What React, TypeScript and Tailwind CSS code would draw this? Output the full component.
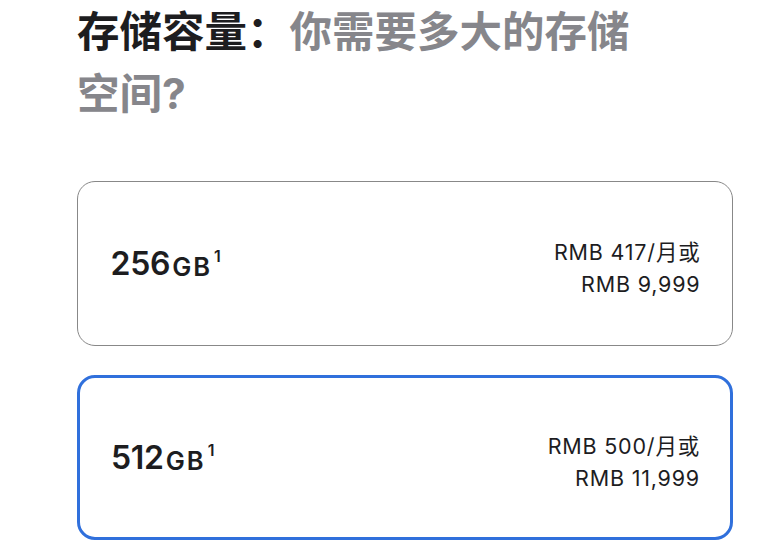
import React from "react";

const font = { fontFamily: 'Inter, "Noto Sans CJK SC", sans-serif' };

function Card({
  size,
  monthly,
  total,
  selected,
}: {
  size: string;
  monthly: string;
  total: string;
  selected?: boolean;
}) {
  return (
    <div
      className={
        selected
          ? "flex h-[165px] w-[656px] items-center justify-between rounded-[18px] border-[3px] border-[#3070dc] bg-white pl-[31px] pr-[30px]"
          : "flex h-[165px] w-[656px] items-center justify-between rounded-[18px] border-[1.5px] border-[#888888] bg-white pl-[32.5px] pr-[31.5px]"
      }
    >
      <div className="flex items-start text-[#1d1d1f]">
        <span className="text-[32px] font-semibold leading-[36px] tracking-[-0.3px]">{size}</span>
        <span className="ml-[2px] mt-[7px] text-[25.5px] font-semibold leading-[28px] tracking-[2px]">GB</span>
        <span className="ml-[2px] mt-[1px] text-[16px] font-semibold leading-[18px]">1</span>
      </div>
      <div className="mt-[9px] text-right text-[21.5px] leading-[32px] tracking-[0.8px] text-[#1d1d1f]">
        <div>{monthly}</div>
        <div>{total}</div>
      </div>
    </div>
  );
}

export default function App() {
  return (
    <div className="min-h-[552px] w-[780px] bg-white pl-[77px] pt-[1px]" style={font}>
      <h2 className="w-[585px] text-[42.5px] font-bold leading-[62px] text-[#86868b]">
        <span className="text-[#1d1d1f]">存储容量：</span>你需要多大的存储空间?
      </h2>
      <div className="mt-[56px] flex flex-col gap-[29px]">
        <Card size="256" monthly="RMB 417/月或" total="RMB 9,999" />
        <Card size="512" monthly="RMB 500/月或" total="RMB 11,999" selected />
      </div>
    </div>
  );
}
